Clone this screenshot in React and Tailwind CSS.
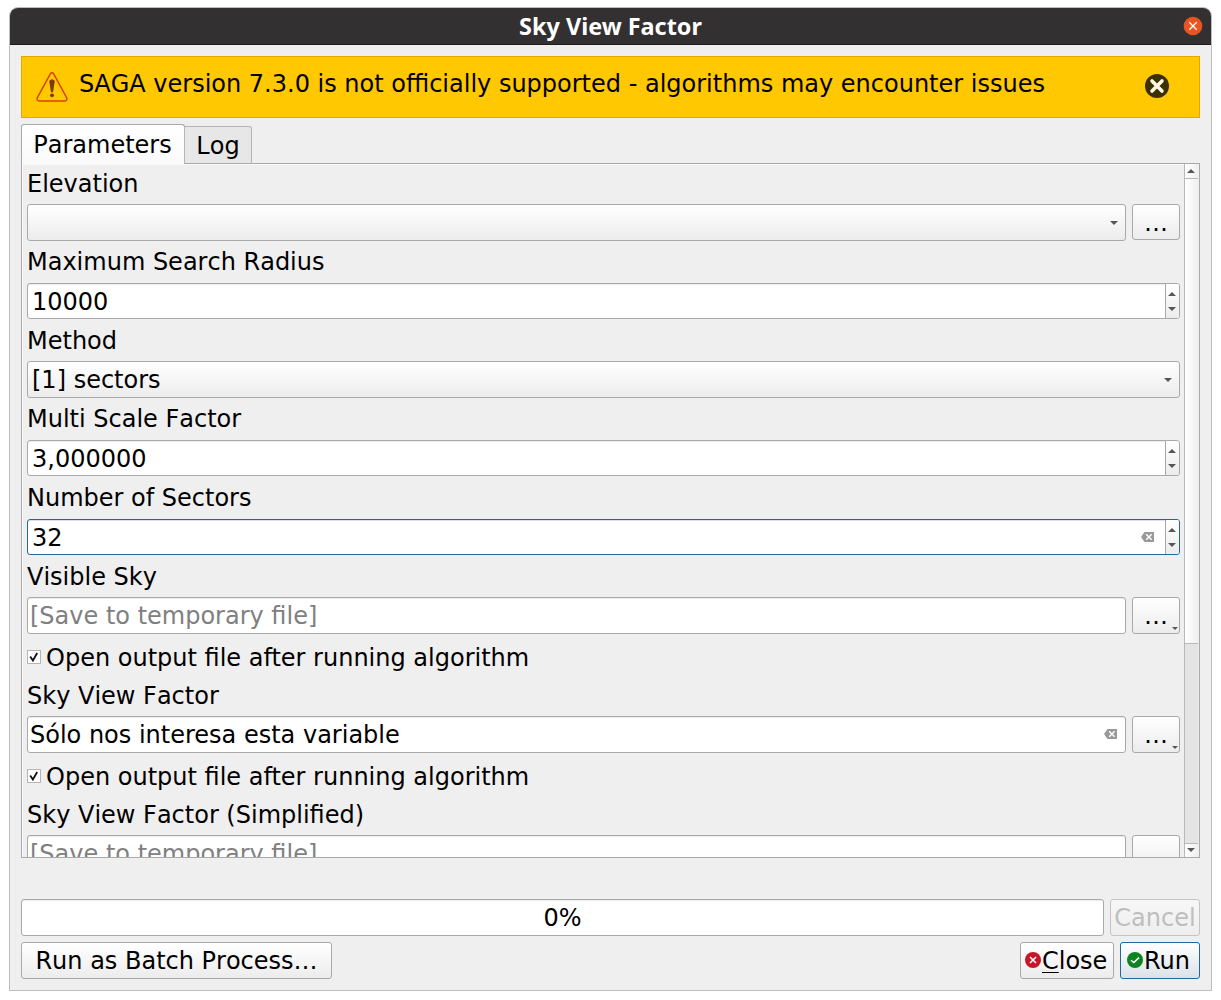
const field = "border border-[#a9a9a9] rounded-[3px]";
const raised = "bg-linear-to-b from-[#ffffff] to-[#ececec]";

function Arrow({ up = false, className = "" }) {
  return (
    <svg width="8" height="4" viewBox="0 0 8 4" className={`block shrink-0 ${className}`}>
      <path d={up ? "M0 4 L4 0 L8 4Z" : "M0 0 L4 4 L8 0Z"} fill="#565656" />
    </svg>
  );
}

function Clear({ className = "" }) {
  return (
    <svg width="13" height="10" viewBox="0 0 13 10" className={`block shrink-0 ${className}`}>
      <path d="M3.5 0H13V10H3.5L0 5Z" fill="#999" />
      <path d="M5.2 2.2L10.6 7.8M10.6 2.2L5.2 7.8" stroke="#fff" strokeWidth="1.4" />
    </svg>
  );
}

function Label({ children, className = "h-[42px]" }) {
  return (
    <div className={`flex shrink-0 items-center whitespace-nowrap ${className}`}>
      <span>{children}</span>
    </div>
  );
}

function Spin({ value, focused = false }) {
  return (
    <div
      className={`flex h-9 shrink-0 items-stretch rounded-[3px] border bg-white ${
        focused ? "border-[#1f6a9c] shadow-[inset_0_1px_0_#d5e3ed]" : "border-[#a9a9a9] shadow-[inset_0_1px_0_#ececec]"
      }`}
    >
      <div className="flex flex-1 items-center pt-[2px] pl-1">{value}</div>
      {focused && <Clear className="mr-[11px] self-center" />}
      <div className={`flex w-[14px] flex-col items-center rounded-r-[2px] border-l border-[#a9a9a9] pt-[8px] pr-px ${raised}`}>
        <Arrow up />
        <Arrow className="mt-[11px]" />
      </div>
    </div>
  );
}

function Dots({ menu = false, className = "h-[37px]" }) {
  return (
    <button className={`relative w-12 shrink-0 ${field} ${raised} ${className}`}>
      <span className="relative top-[0.5px] block leading-[34px]">…</span>
      {menu && (
        <svg width="6" height="3" viewBox="0 0 6 3" className="absolute right-[1px] bottom-[3px]">
          <path d="M0 0H6L3 3Z" fill="#565656" />
        </svg>
      )}
    </button>
  );
}

function FileRow({ value, placeholder = false }) {
  return (
    <div className="flex h-[37px] shrink-0 gap-1.5">
      <div className={`flex flex-1 items-center justify-between bg-white pl-[2px] shadow-[inset_0_1px_0_#ececec] ${field}`}>
        <span className={placeholder ? "text-[#808080]" : "[font-kerning:normal]"}>{value}</span>
        {!placeholder && <Clear className="mr-[8px] mb-[2px]" />}
      </div>
      <Dots menu />
    </div>
  );
}

function Check() {
  return (
    <div className="flex h-[47px] shrink-0 items-center gap-[5px]">
      <span className="mb-[2px] flex size-[14px] items-center justify-center border border-[#b5b5b5] bg-white">
        <svg width="12" height="12" viewBox="0 0 12 12">
          <path d="M2.2 5.5L4.9 9.5L9.2 2" fill="none" stroke="#111" strokeWidth="1.8" />
        </svg>
      </span>
      <span className="[font-kerning:normal]">Open output file after running algorithm</span>
    </div>
  );
}

export default function App() {
  return (
    <div className="h-[1000px] w-[1221px] bg-white pt-[7px] pl-[9px] font-['DejaVu_Sans',sans-serif] text-[24px] leading-[28px] whitespace-nowrap text-black [font-kerning:none]">
      <div className="flex h-[984px] w-[1203px] flex-col overflow-hidden rounded-t-[9px] border border-[#bdbdbd] bg-[#efefef]">
        <header className="flex h-[37px] shrink-0 items-center border-b border-[#1c1a1b] bg-[#333031]">
          <div className="w-7" />
          <h1 className="flex-1 text-center font-['Noto_Sans',sans-serif] text-[23.4px] font-bold text-white [font-kerning:normal]">Sky View Factor</h1>
          <svg width="20" height="20" viewBox="0 0 20 20" className="mr-[8px]">
            <circle cx="10" cy="10" r="9.3" fill="#e95420" />
            <path d="M6.3 6.3L13.7 13.7M13.7 6.3L6.3 13.7" stroke="#fff" strokeWidth="1.3" />
          </svg>
        </header>

        <main className="flex flex-1 flex-col px-[11px] pt-[11px] pb-[11px]">
          <section className="flex h-[62px] shrink-0 items-start border border-[#e0a800] bg-[#ffc800]">
            <svg width="32" height="30" viewBox="0 0 32 30" className="mt-[15px] ml-[14px]">
              <path d="M14.3 1.8Q16 -0.3 17.7 1.8L30.8 26Q31.5 28.8 28.8 29H3.2Q0.5 28.8 1.2 26Z" fill="none" stroke="#d64300" strokeWidth="1.5" />
              <path d="M13.2 9Q16 5.5 18.8 9L17 20.3H15Z" fill="#7c3a10" />
              <circle cx="16" cy="23.3" r="1.9" fill="#7c3a10" />
            </svg>
            <p className="mt-[13px] ml-[11px] flex-1">SAGA version 7.3.0 is not officially supported - algorithms may encounter issues</p>
            <svg width="24" height="24" viewBox="0 0 24 24" className="mt-[17px] mr-[30px]">
              <circle cx="12" cy="12" r="12" fill="#3d3000" />
              <path d="M7 7L17 17M17 7L7 17" stroke="#fff8e0" strokeWidth="3.6" strokeLinecap="round" />
            </svg>
          </section>

          <nav className="z-10 mt-1.5 flex h-[40px] shrink-0 items-end">
            <div className="flex h-[40px] w-[164px] items-center justify-center rounded-t-[3px] border border-b-0 border-[#a9a9a9] bg-linear-to-b from-white to-[#fafafa] pr-px">
              <span>Parameters</span>
            </div>
            <div className="-ml-px flex h-[38px] w-[68px] items-center justify-center rounded-tr-[3px] border border-[#b5b5b5] border-b-[#a9a9a9] bg-[#e7e7e7] pt-px">
              <span>Log</span>
            </div>
          </nav>

          <section className="-mt-px flex h-[695px] shrink-0 overflow-hidden border border-[#a9a9a9]">
            <div className="flex flex-1 flex-col overflow-hidden border-t border-l border-[#fafafa] pr-[4px] pl-[4px]">
              <Label className="h-[39px] pb-[2px]">Elevation</Label>
              <div className="flex h-[37px] shrink-0 gap-1.5">
                <div className={`flex flex-1 items-center justify-end pr-[7px] ${field} ${raised}`}>
                  <Arrow />
                </div>
                <Dots className="h-9" />
              </div>
              <Label>Maximum Search Radius</Label>
              <Spin value="10000" />
              <Label className="h-[42px] pt-[2px]">Method</Label>
              <div className={`flex h-[37px] shrink-0 items-center justify-between pr-[7px] pl-1 ${field} ${raised}`}>
                <span>[1] sectors</span>
                <Arrow />
              </div>
              <Label>Multi Scale Factor</Label>
              <Spin value="3,000000" />
              <Label className="h-[43px]">Number of Sectors</Label>
              <Spin value="32" focused />
              <Label className="h-[42px] pt-[2px]">Visible Sky</Label>
              <FileRow value="[Save to temporary file]" placeholder />
              <Check />
              <Label className="h-[35px] pb-[6px]">Sky View Factor</Label>
              <FileRow value="Sólo nos interesa esta variable" />
              <Check />
              <Label className="h-[35px] pb-[6px]">Sky View Factor (Simplified)</Label>
              <FileRow value="[Save to temporary file]" placeholder />
            </div>
            <div className="mr-px flex w-[14px] flex-col border-l border-[#b8b8b8]">
              <div className="flex h-[15px] items-center justify-center border-b border-[#b8b8b8] bg-linear-to-r from-white to-[#efefef] pr-px">
                <Arrow up />
              </div>
              <div className="h-[465px] border-b border-[#b8b8b8] bg-linear-to-r from-white to-[#efefef]" />
              <div className="flex-1 bg-[#e4e4e4]" />
              <div className="flex h-[14px] items-center justify-center border-t border-[#b8b8b8] bg-linear-to-r from-white to-[#efefef] pr-px pb-px">
                <Arrow />
              </div>
            </div>
          </section>

          <div className="mt-[41px] flex h-[37px] shrink-0 gap-1.5">
            <div className={`flex flex-1 items-center justify-center bg-white shadow-[inset_0_1px_0_#ececec] ${field}`}>
              <span>0%</span>
            </div>
            <button className="flex w-[90px] items-center justify-center rounded-[3px] border border-[#c4c4c4] bg-linear-to-b from-[#f7f7f7] to-[#eeeeee] text-[#bebebe]">
              Cancel
            </button>
          </div>

          <footer className="mt-1.5 flex h-[37px] shrink-0 gap-1.5">
            <button className={`flex w-[311px] items-center justify-center ${field} ${raised}`}>Run as Batch Process…</button>
            <div className="flex-1" />
            <button className={`flex w-[94px] items-center pl-[4px] ${field} ${raised}`}>
              <svg width="16" height="16" viewBox="0 0 16 16" className="mr-[1px] mb-px">
                <circle cx="8" cy="8" r="8" fill="#c7162b" />
                <path d="M5 5L11 11M11 5L5 11" stroke="#fff" strokeWidth="1.5" />
              </svg>
              <span>
                <span className="underline decoration-1 underline-offset-[3px] [text-decoration-skip-ink:none]">C</span>lose
              </span>
            </button>
            <button className="flex w-[80px] items-center rounded-[3px] border border-[#1f6a9c] bg-linear-to-b from-white to-[#dbe2e7] pl-[6px] [font-kerning:normal]">
              <svg width="16" height="16" viewBox="0 0 16 16" className="mr-[1px] mb-px">
                <circle cx="8" cy="8" r="8" fill="#0e8420" />
                <path d="M4 8.2L6.8 10.6L12 5.6" fill="none" stroke="#fff" strokeWidth="1.5" />
              </svg>
              <span>Run</span>
            </button>
          </footer>
        </main>
      </div>
    </div>
  );
}
